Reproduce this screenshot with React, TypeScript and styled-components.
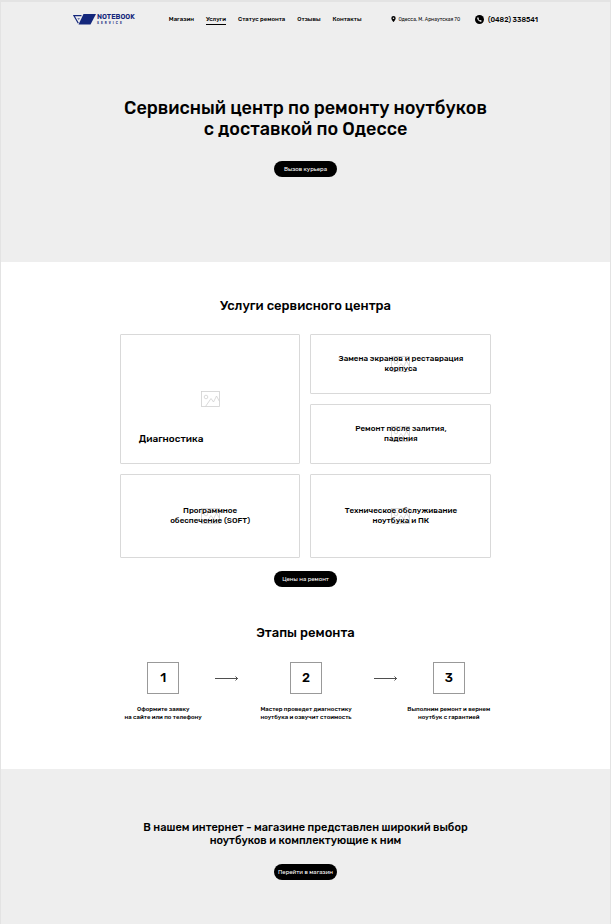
import React from "react";
import styled, { createGlobalStyle } from "styled-components";

const GlobalStyle = createGlobalStyle`
  *, *::before, *::after { box-sizing: border-box; }
  body {
    margin: 0;
    background: #fff;
    color: #000;
    font-family: Rubik, Roboto, "Liberation Sans", sans-serif;
    font-weight: 500;
  }
  h1, h2, h3, p, ol { margin: 0; padding: 0; font-weight: 500; }
  a { color: inherit; text-decoration: none; }
`;

const Page = styled.div`
  min-height: 100vh;
  display: flex;
  flex-direction: column;
  border: solid #e3e3e3;
  border-width: 2px 1px 0;
`;

const Hero = styled.div`
  background: #eee;
  padding-bottom: 85px;
`;

const Header = styled.header`
  height: 34px;
  padding: 0 72px;
  display: flex;
  align-items: center;
  white-space: nowrap;
`;

const Logo = styled.a`
  display: flex;
  align-items: center;
  color: #14277c;
  svg { width: 24px; height: 12px; }
`;

const LogoText = styled.span`
  display: flex;
  flex-direction: column;
  font-size: 7px;
  line-height: 8px;
  font-weight: 600;
`;

const LogoSub = styled.span`
  font-size: 3px;
  line-height: 4px;
  letter-spacing: 2px;
`;

const Nav = styled.nav`
  display: flex;
  gap: 12px;
  margin-left: 34px;
`;

const NavLink = styled.a<{ $active?: boolean }>`
  margin-top: 2px;
  padding-bottom: 1px;
  font-size: 6px;
  line-height: 8px;
  border-bottom: 1px solid ${(p) => (p.$active ? "#000" : "transparent")};
`;

const Contacts = styled.div`
  display: flex;
  gap: 15px;
  margin-left: auto;
`;

const Contact = styled.a<{ $strong?: boolean }>`
  display: flex;
  align-items: center;
  gap: ${(p) => (p.$strong ? 4 : 2)}px;
  font-size: ${(p) => (p.$strong ? 7 : 5)}px;
  font-weight: ${(p) => (p.$strong ? 500 : 400)};
  line-height: 9px;
`;

const Title = styled.h1`
  margin-top: 62px;
  text-align: center;
  font-size: 18px;
  line-height: 21px;
`;

const Center = styled.div<{ $top: number }>`
  display: flex;
  justify-content: center;
  margin-top: ${(p) => p.$top}px;
`;

const Pill = styled.button`
  min-width: 63px;
  height: 16px;
  padding: 0 4px;
  border: 0;
  border-radius: 8px;
  background: #000;
  color: #fff;
  font: 400 6px/16px Rubik, Roboto, "Liberation Sans", sans-serif;
  cursor: pointer;
`;

const Main = styled.main`
  padding: 36px 0 48px;
`;

const Heading = styled.h2`
  text-align: center;
  font-size: 13px;
  line-height: 16px;
`;

const Services = styled.div`
  width: 61%;
  margin: 20px auto 0;
  display: grid;
  grid-template-columns: 1fr 1fr;
  grid-template-rows: 60px 60px 84px;
  gap: 10px;
`;

const Card = styled.a<{ $large?: boolean }>`
  display: grid;
  grid-row: span ${(p) => (p.$large ? 2 : 1)};
  place-items: center;
  border: 1px solid #d9d9d9;
  border-radius: 1px;
  > * { grid-area: 1 / 1; }
`;

const CardTitle = styled.h3<{ $large?: boolean }>`
  font-size: ${(p) => (p.$large ? 10 : 8)}px;
  line-height: ${(p) => (p.$large ? 12 : 10)}px;
  text-align: center;
  ${(p) => p.$large && "place-self: end start; padding: 0 0 18px 18px;"}
`;

const Steps = styled.ol`
  width: 63%;
  margin: 21px auto 0;
  padding-left: 1px;
  display: grid;
  grid-template-columns: 97px 1fr 97px 1fr 97px;
  list-style: none;
`;

const Step = styled.li`
  display: flex;
  flex-direction: column;
  align-items: center;
  gap: 11px;
  white-space: nowrap;
  text-align: center;
  font-size: 6px;
  line-height: 8px;
`;

const StepNumber = styled.span`
  width: 32px;
  height: 32px;
  border: 1px solid #999;
  display: grid;
  place-items: center;
  font-size: 13px;
  line-height: 16px;
`;

const ArrowCell = styled.li<{ $end?: boolean }>`
  height: 32px;
  padding: 0 3px;
  display: flex;
  align-items: center;
  justify-content: ${(p) => (p.$end ? "flex-end" : "flex-start")};
`;

const Shop = styled.section`
  flex: 1;
  background: #eee;
  padding: 52px 0 44px;
`;

const ShopTitle = styled.h2`
  text-align: center;
  font-size: 11px;
  line-height: 13px;
`;

const Placeholder = () => (
  <svg width="19" height="16" viewBox="0 0 19 16" fill="none" stroke="#d0d0d0" strokeWidth="0.8" aria-hidden="true">
    <rect x="0.5" y="0.5" width="18" height="15" />
    <circle cx="5" cy="6" r="1.8" />
    <path d="M4.5 15.5 10 7.5l2.500 3.500L15.500 5l3 5.500" />
  </svg>
);

const Arrow = () => (
  <svg width="23" height="5" viewBox="0 0 23 5" fill="none" stroke="#222" strokeWidth="0.8" aria-hidden="true">
    <path d="M0 2.5h22.5M20.5 .5l2 2-2 2" />
  </svg>
);

const links = ["Магазин", "Услуги", "Статус ремонта", "Отзывы", "Контакты"];

const services: [string, string][] = [
  ["Замена экранов и реставрация", "корпуса"],
  ["Ремонт после залития,", "падения"],
  ["Программное", "обеспечение (SOFT)"],
  ["Техническое обслуживание", "ноутбука и ПК"],
];

const steps: [string, string][] = [
  ["Оформите заявку", "на сайте или по телефону"],
  ["Мастер проведет диагностику", "ноутбука и озвучит стоимость"],
  ["Выполним ремонт и вернем", "ноутбук с гарантией"],
];

export default function App() {
  return (
    <>
      <GlobalStyle />
      <Page>
        <Hero>
          <Header>
            <Logo href="#">
              <svg viewBox="0 0 24 12" aria-hidden="true">
                <path d="M10.5 1H23L17.500 11.500H5.500z" fill="#14277c" />
                <path d="M8.500 2.700H1l4.300 7.500" stroke="#14277c" strokeWidth="1.2" fill="none" />
                <path d="M4.300 5h2.700L5.700 7.300z" fill="#14277c" opacity=".55" />
              </svg>
              <LogoText>
                NOTEBOOK
                <LogoSub>SERVICE</LogoSub>
              </LogoText>
            </Logo>
            <Nav>
              {links.map((label) => (
                <NavLink key={label} href="#" $active={label === "Услуги"}>{label}</NavLink>
              ))}
            </Nav>
            <Contacts>
              <Contact href="#">
                <svg width="5" height="6" viewBox="0 0 5 6" aria-hidden="true">
                  <path fillRule="evenodd" d="M2.5 0A2.2 2.2 0 0 0 .3 2.2C.3 3.8 2.5 6 2.5 6s2.2-2.2 2.2-3.8A2.2 2.2 0 0 0 2.5 0zm0 1.4a.8.8 0 1 1 0 1.6.8.8 0 0 1 0-1.6z" />
                </svg>
                Одесса, М. Арнаутская 70
              </Contact>
              <Contact href="tel:0482338541" $strong>
                <svg width="9" height="9" viewBox="0 0 18 18" aria-hidden="true">
                  <circle cx="9" cy="9" r="9" />
                  <path fill="#fff" d="M6.3 4.5 7.8 7l-1 1.1c.6 1.3 1.6 2.3 2.9 2.9l1.1-1 2.6 1.5c-.1 1.2-1 2-2.2 2C8 13 5 10 4.4 6.7c0-1.2.8-2.1 1.9-2.2z" />
                </svg>
                (0482) 338541
              </Contact>
            </Contacts>
          </Header>
          <Title>Сервисный центр по ремонту ноутбуков<br />с доставкой по Одессе</Title>
          <Center $top={21}><Pill>Вызов курьера</Pill></Center>
        </Hero>
        <Main>
          <Heading>Услуги сервисного центра</Heading>
          <Services>
            <Card href="#" $large>
              <Placeholder />
              <CardTitle $large>Диагностика</CardTitle>
            </Card>
            {services.map(([a, b]) => (
              <Card href="#" key={a}>
                <Placeholder />
                <CardTitle>{a}<br />{b}</CardTitle>
              </Card>
            ))}
          </Services>
          <Center $top={13}><Pill>Цены на ремонт</Pill></Center>
          <Center $top={38}><Heading>Этапы ремонта</Heading></Center>
          <Steps>
            {steps.map(([a, b], i) => (
              <React.Fragment key={a}>
                {i > 0 && <ArrowCell $end={i === 2} aria-hidden="true"><Arrow /></ArrowCell>}
                <Step>
                  <StepNumber>{i + 1}</StepNumber>
                  <p>{a}<br />{b}</p>
                </Step>
              </React.Fragment>
            ))}
          </Steps>
        </Main>
        <Shop>
          <ShopTitle>В нашем интернет - магазине представлен широкий выбор<br />ноутбуков и комплектующие к ним</ShopTitle>
          <Center $top={17}><Pill>Перейти в магазин</Pill></Center>
        </Shop>
      </Page>
    </>
  );
}
